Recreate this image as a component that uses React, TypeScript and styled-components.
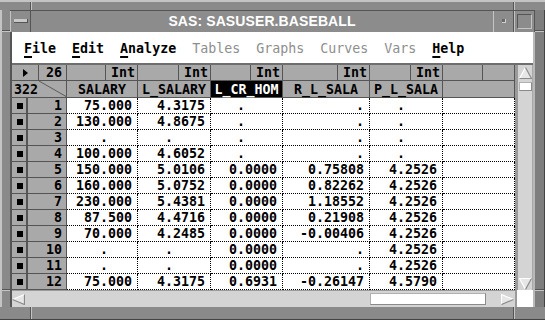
import React from 'react';
import styled, { createGlobalStyle } from 'styled-components';

const Global = createGlobalStyle`
  html, body { margin: 0; padding: 0; background: #8a8a8a; }
  #root { width: 545px; height: 320px; overflow: hidden; }
  * { box-sizing: border-box; }
`;

const MONO = `"DejaVu Sans Mono", "Liberation Mono", monospace`;
const DARK = '#555555';
const LIGHT = '#c4c4c4';
const FRAME = '#8a8a8a';
const CELL = '#a9a9a9';

const Window = styled.div`
  width: 545px;
  height: 320px;
  display: flex;
  flex-direction: column;
  background: ${FRAME};
`;

const HEdge = styled.div<{ $h: number; $top?: boolean }>`
  height: ${p => p.$h}px;
  flex: none;
  display: flex;
  ${p => (p.$top ? `border-top: 2px solid ${LIGHT};` : `border-bottom: 1px solid #444;`)}
`;

const HSeg = styled.div<{ $w?: number; $divider?: boolean }>`
  ${p => (p.$w ? `width: ${p.$w}px; flex: none;` : 'flex: 1;')}
  ${p => p.$divider && `border-right: 1px solid ${DARK}; box-shadow: 1px 0 0 ${LIGHT};`}
`;

const Middle = styled.div`
  flex: 1;
  display: flex;
  min-height: 0;
`;

const VEdge = styled.div<{ $w: number; $left?: boolean; $tone: string }>`
  width: ${p => p.$w}px;
  flex: none;
  display: flex;
  flex-direction: column;
  background: ${p => p.$tone};
  ${p => (p.$left ? `border-left: 2px solid ${LIGHT};` : `border-right: 1px solid #444;`)}
`;

const VSeg = styled.div<{ $h?: number; $divider?: boolean }>`
  ${p => (p.$h ? `height: ${p.$h}px; flex: none;` : 'flex: 1;')}
  ${p => p.$divider && `border-bottom: 1px solid ${DARK}; box-shadow: 0 1px 0 ${LIGHT};`}
`;

const Inner = styled.div`
  width: 525px;
  flex: none;
  display: flex;
  flex-direction: column;
`;

const TitleBar = styled.div`
  height: 22px;
  flex: none;
  display: flex;
  background: #8c8c8c;
  border-top: 1px solid ${DARK};
`;

const TitleButton = styled.div<{ $side: 'left' | 'right' }>`
  width: 21px;
  flex: none;
  display: flex;
  align-items: center;
  justify-content: center;
  border-left: 1px solid ${LIGHT};
  border-right: 1px solid ${DARK};
`;

const SysBar = styled.div`
  width: 14px;
  height: 4px;
  background: #c8c8c8;
  border-bottom: 1px solid ${DARK};
  border-right: 1px solid ${DARK};
  margin-top: -1px;
`;

const MinDot = styled.div`
  width: 4px;
  height: 4px;
  background: #6a6a6a;
  border-right: 1px solid #d0d0d0;
  border-bottom: 1px solid #d0d0d0;
  margin-top: -1px;
`;

const MaxBox = styled.div`
  width: 15px;
  height: 15px;
  border-top: 1px solid ${DARK};
  border-left: 1px solid ${DARK};
  border-right: 1px solid ${LIGHT};
  border-bottom: 1px solid ${LIGHT};
  margin-top: -1px;
`;

const Title = styled.div`
  flex: 1;
  text-align: center;
  color: #ffffff;
  font-family: "Liberation Sans", Arial, sans-serif;
  font-weight: bold;
  font-size: 14px;
  line-height: 21px;
  letter-spacing: 0.1px;
`;

const Client = styled.div`
  flex: 1;
  display: flex;
  flex-direction: column;
  border-left: 2px solid ${DARK};
  border-right: 2px solid #b8b8b8;
`;

const MenuBar = styled.div`
  height: 33px;
  flex: none;
  display: flex;
  align-items: center;
  gap: 16px;
  padding-left: 12px;
  background: #ffffff;
  border-bottom: 2px solid #6e6e6e;
  font-family: ${MONO};
  font-size: 13.3px;
`;

const MenuItem = styled.span<{ $disabled?: boolean }>`
  font-weight: ${p => (p.$disabled ? 400 : 700)};
  color: ${p => (p.$disabled ? '#8e8e8e' : '#000000')};
  white-space: pre;
  margin-top: 1px;
`;

const Mnemonic = styled.span`
  text-decoration: underline;
  text-decoration-thickness: 2px;
  text-underline-offset: 3px;
`;

const GridArea = styled.div`
  display: flex;
  flex: none;
`;

const Table = styled.div`
  width: 503px;
  flex: none;
  display: flex;
  flex-direction: column;
  font-family: ${MONO};
  font-weight: 700;
  font-size: 13.3px;
  color: #000;
`;

const Row = styled.div<{ $h: number }>`
  display: flex;
  height: ${p => p.$h}px;
`;

const HeadCell = styled.div<{ $w: number; $selected?: boolean; $align?: string }>`
  width: ${p => p.$w}px;
  flex: none;
  display: flex;
  align-items: center;
  justify-content: ${p => p.$align || 'center'};
  position: relative;
  background: ${p => (p.$selected ? '#000' : CELL)};
  color: ${p => (p.$selected ? '#fff' : '#000')};
  border-right: 1px solid ${DARK};
  border-bottom: 1px solid ${DARK};
  white-space: pre;
  line-height: 15px;
`;

const TypeSpacer = styled.div`
  flex: 1;
  align-self: stretch;
  border-right: 1px solid ${DARK};
`;

const TypeBox = styled.div`
  width: 31px;
  flex: none;
  text-align: right;
  padding-right: 2px;
`;

const CornerArrow = styled.div`
  width: 0;
  height: 0;
  border-top: 4px solid transparent;
  border-bottom: 4px solid transparent;
  border-left: 5px solid #000;
  margin-left: 1px;
`;

const CornerText = styled.span<{ $pad: 'left' | 'right' }>`
  ${p => (p.$pad === 'left' ? 'padding-left: 2px;' : 'padding-right: 4px;')}
`;

const Diagonal = styled.svg`
  position: absolute;
  left: 27px;
  top: 0;
`;

const MarkCell = styled.div`
  width: 16px;
  flex: none;
  display: flex;
  align-items: center;
  justify-content: center;
  background: ${CELL};
  border-right: 2px solid ${DARK};
  border-bottom: 1px solid ${DARK};
`;

const Mark = styled.div`
  width: 6px;
  height: 6px;
  background: #000;
  margin-left: 1px;
`;

const NumCell = styled.div`
  width: 39px;
  flex: none;
  text-align: right;
  padding-right: 4px;
  background: ${CELL};
  border-right: 1px solid ${DARK};
  border-bottom: 1px solid ${DARK};
  line-height: 15px;
`;

const DataCell = styled.div<{ $w: number }>`
  width: ${p => p.$w}px;
  flex: none;
  background: #fff;
  text-align: right;
  padding-right: 5px;
  white-space: pre;
  line-height: 15px;
  border-right: 1px dotted #000;
  border-bottom: 1px dotted #000;
`;

const VScroll = styled.div`
  width: 18px;
  flex: none;
  display: flex;
  flex-direction: column;
  align-items: center;
  background: #d4d4d4;
  border-left: 3px solid #9a9a9a;
  border-right: 1px solid #a8a8a8;
  padding-top: 2px;
`;

const Thumb = styled.div<{ $w: number; $h: number }>`
  width: ${p => p.$w}px;
  height: ${p => p.$h}px;
  flex: none;
  background: #ffffff;
  border-right: 1px solid #8a8a8a;
  border-bottom: 1px solid #8a8a8a;
  border-top: 1px solid #b0b0b0;
  border-left: 1px solid #b0b0b0;
`;

const Fill = styled.div`
  flex: 1;
`;

const HScrollRow = styled.div`
  display: flex;
  height: 17px;
  flex: none;
`;

const HTrack = styled.div`
  width: 503px;
  flex: none;
  display: flex;
  align-items: center;
  background: #d4d4d4;
  border-top: 1px solid #9a9a9a;
`;

const Gap = styled.div<{ $w: number }>`
  width: ${p => p.$w}px;
  flex: none;
`;

const Corner = styled.div`
  width: 18px;
  flex: none;
  background: #ffffff;
  border-left: 2px solid #9a9a9a;
`;

const ArrowSvg = styled.svg`
  flex: none;
  display: block;
`;

type Dir = 'up' | 'down' | 'left' | 'right';

const Arrow: React.FC<{ dir: Dir }> = ({ dir }) => {
  const pts: Record<Dir, { w: number; h: number; p: string; lit: string; shade: string }> = {
    up: { w: 13, h: 12, p: '6.5,0.5 12.5,11.5 0.5,11.5', lit: '0.5,11.5 6.5,0.5', shade: '6.5,0.5 12.5,11.5 0.5,11.5' },
    down: { w: 13, h: 12, p: '0.5,0.5 12.5,0.5 6.5,11.5', lit: '6.5,11.5 0.5,0.5 12.5,0.5', shade: '12.5,0.5 6.5,11.5' },
    left: { w: 13, h: 11, p: '0.5,5.5 12.5,0.5 12.5,10.5', lit: '12.5,0.5 0.5,5.5', shade: '0.5,5.5 12.5,10.5 12.5,0.5' },
    right: { w: 13, h: 11, p: '0.5,0.5 12.5,5.5 0.5,10.5', lit: '0.5,10.5 0.5,0.5 12.5,5.5', shade: '12.5,5.5 0.5,10.5' },
  };
  const a = pts[dir];
  return (
    <ArrowSvg width={a.w} height={a.h} viewBox={`0 0 ${a.w} ${a.h}`}>
      <polygon points={a.p} fill="#e6e6e6" />
      <polyline points={a.lit} fill="none" stroke="#ffffff" strokeWidth="1.2" />
      <polyline points={a.shade} fill="none" stroke="#8a8a8a" strokeWidth="1.2" />
    </ArrowSvg>
  );
};

const columns = [
  { name: 'SALARY', w: 71, type: 'Int', miss: '.   ' },
  { name: 'L_SALARY', w: 73, type: 'Int', miss: '.    ' },
  { name: 'L_CR_HOM', w: 72, type: 'Int', miss: '.    ', selected: true },
  { name: 'R_L_SALA', w: 87, type: 'Int', miss: '.' },
  { name: 'P_L_SALA', w: 73, type: 'Int', miss: '.    ' },
  { name: '', w: 72, type: '', miss: '' },
];

const M = null;
const data: (string | null)[][] = [
  ['75.000', '4.3175', M, M, M],
  ['130.000', '4.8675', M, M, M],
  [M, M, M, M, M],
  ['100.000', '4.6052', M, M, M],
  ['150.000', '5.0106', '0.0000', '0.75808', '4.2526'],
  ['160.000', '5.0752', '0.0000', '0.82262', '4.2526'],
  ['230.000', '5.4381', '0.0000', '1.18552', '4.2526'],
  ['87.500', '4.4716', '0.0000', '0.21908', '4.2526'],
  ['70.000', '4.2485', '0.0000', '-0.00406', '4.2526'],
  [M, M, '0.0000', M, '4.2526'],
  [M, M, '0.0000', M, '4.2526'],
  ['75.000', '4.3175', '0.6931', '-0.26147', '4.5790'],
];

const menus: { label: string; disabled?: boolean }[] = [
  { label: 'File' },
  { label: 'Edit' },
  { label: 'Analyze' },
  { label: 'Tables', disabled: true },
  { label: 'Graphs', disabled: true },
  { label: 'Curves', disabled: true },
  { label: 'Vars', disabled: true },
  { label: 'Help' },
];

export default function App() {
  return (
    <>
      <Global />
      <Window>
        <HEdge $h={10} $top>
          <HSeg $w={31} $divider />
          <HSeg $divider />
          <HSeg $w={31} />
        </HEdge>
        <Middle>
          <VEdge $w={10} $left $tone={FRAME}>
            <VSeg $h={21} $divider />
            <VSeg $divider />
            <VSeg $h={17} />
          </VEdge>
          <Inner>
            <TitleBar>
              <TitleButton $side="left">
                <SysBar />
              </TitleButton>
              <Title>SAS: SASUSER.BASEBALL</Title>
              <TitleButton $side="right">
                <MinDot />
              </TitleButton>
              <TitleButton $side="right">
                <MaxBox />
              </TitleButton>
            </TitleBar>
            <Client>
              <MenuBar>
                {menus.map(m => (
                  <MenuItem key={m.label} $disabled={m.disabled}>
                    {m.disabled ? (
                      m.label
                    ) : (
                      <>
                        <Mnemonic>{m.label[0]}</Mnemonic>
                        {m.label.slice(1)}
                      </>
                    )}
                  </MenuItem>
                ))}
              </MenuBar>
              <GridArea>
                <Table>
                  <Row $h={16}>
                    <HeadCell $w={27}>
                      <CornerArrow />
                    </HeadCell>
                    <HeadCell $w={28} $align="flex-end">
                      <CornerText $pad="right">26</CornerText>
                    </HeadCell>
                    {columns.map((c, i) => (
                      <HeadCell key={i} $w={c.w} $align="stretch">
                        <TypeSpacer />
                        <TypeBox>{c.type}</TypeBox>
                      </HeadCell>
                    ))}
                  </Row>
                  <Row $h={17}>
                    <HeadCell $w={55} $align="flex-start">
                      <CornerText $pad="left">322</CornerText>
                      <Diagonal width="28" height="16" viewBox="0 0 28 16">
                        <line x1="0" y1="0" x2="28" y2="16" stroke="#5a5a5a" strokeWidth="1" />
                      </Diagonal>
                    </HeadCell>
                    {columns.map((c, i) => (
                      <HeadCell key={i} $w={c.w} $selected={c.selected}>
                        {c.name}
                      </HeadCell>
                    ))}
                  </Row>
                  {data.map((r, ri) => (
                    <Row key={ri} $h={16}>
                      <MarkCell>
                        <Mark />
                      </MarkCell>
                      <NumCell>{ri + 1}</NumCell>
                      {columns.map((c, ci) => (
                        <DataCell key={ci} $w={c.w}>
                          {ci < r.length ? r[ci] ?? c.miss : ''}
                        </DataCell>
                      ))}
                    </Row>
                  ))}
                </Table>
                <VScroll>
                  <Arrow dir="up" />
                  <Gap $w={1} style={{ height: 3 }} />
                  <Thumb $w={13} $h={9} />
                  <Fill />
                  <Arrow dir="down" />
                </VScroll>
              </GridArea>
              <HScrollRow>
                <HTrack>
                  <Arrow dir="left" />
                  <Gap $w={345} />
                  <Thumb $w={116} $h={12} />
                  <Gap $w={15} />
                  <Arrow dir="right" />
                </HTrack>
                <Corner />
              </HScrollRow>
            </Client>
          </Inner>
          <VEdge $w={10} $tone="#7e7e7e">
            <VSeg $h={21} $divider />
            <VSeg $divider />
            <VSeg $h={17} />
          </VEdge>
        </Middle>
        <HEdge $h={13}>
          <HSeg $w={31} $divider />
          <HSeg $divider />
          <HSeg $w={31} />
        </HEdge>
      </Window>
    </>
  );
}
